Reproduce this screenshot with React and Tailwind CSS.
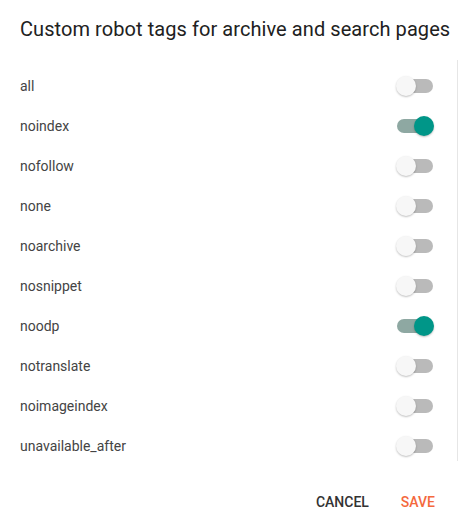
import React from "react";

const tags = [
  ["all", false],
  ["noindex", true],
  ["nofollow", false],
  ["none", false],
  ["noarchive", false],
  ["nosnippet", false],
  ["noodp", true],
  ["notranslate", false],
  ["noimageindex", false],
  ["unavailable_after", false],
];

function Toggle({ on }) {
  return (
    <div className="relative w-[38px] h-[20px] flex items-center">
      <div
        className={
          "w-[36px] h-[14px] ml-[1px] rounded-full " +
          (on ? "bg-[#8ea8a2]" : "bg-[#bababa]")
        }
      />
      <div
        className={
          "absolute top-0 w-[20px] h-[20px] rounded-full shadow-[0_1px_2px_rgba(0,0,0,0.25)] " +
          (on ? "left-[18px] bg-[#009688]" : "left-0 bg-[#f7f7f7]")
        }
      />
    </div>
  );
}

export default function App() {
  return (
    <div
      className="w-[459px] h-[529px] bg-white flex flex-col overflow-hidden"
      style={{ fontFamily: "Roboto, 'Liberation Sans', sans-serif" }}
    >
      <div className="pt-[16px] pl-[20px] h-[60px] text-[20px] leading-[26px] tracking-[0.07px] text-[#212121]">
        Custom robot tags for archive and search pages
      </div>
      <div className="w-[458px] h-[401px] border-r border-[#e6e6e6] overflow-hidden pt-[6px]">
        {tags.map(([name, on]) => (
          <div
            key={name}
            className="h-[40px] flex items-center justify-between pl-[20px] pr-[23px]"
          >
            <span className="text-[14px] text-[#444444]">{name}</span>
            <Toggle on={on} />
          </div>
        ))}
      </div>
      <div className="flex-1 flex items-center justify-end pr-[8px] pt-[14px] gap-0">
        <button className="px-[16px] h-[36px] text-[14px] font-medium text-[#333333]">
          CANCEL
        </button>
        <button className="px-[16px] h-[36px] text-[14px] font-medium text-[#f4693d]">
          SAVE
        </button>
      </div>
    </div>
  );
}
